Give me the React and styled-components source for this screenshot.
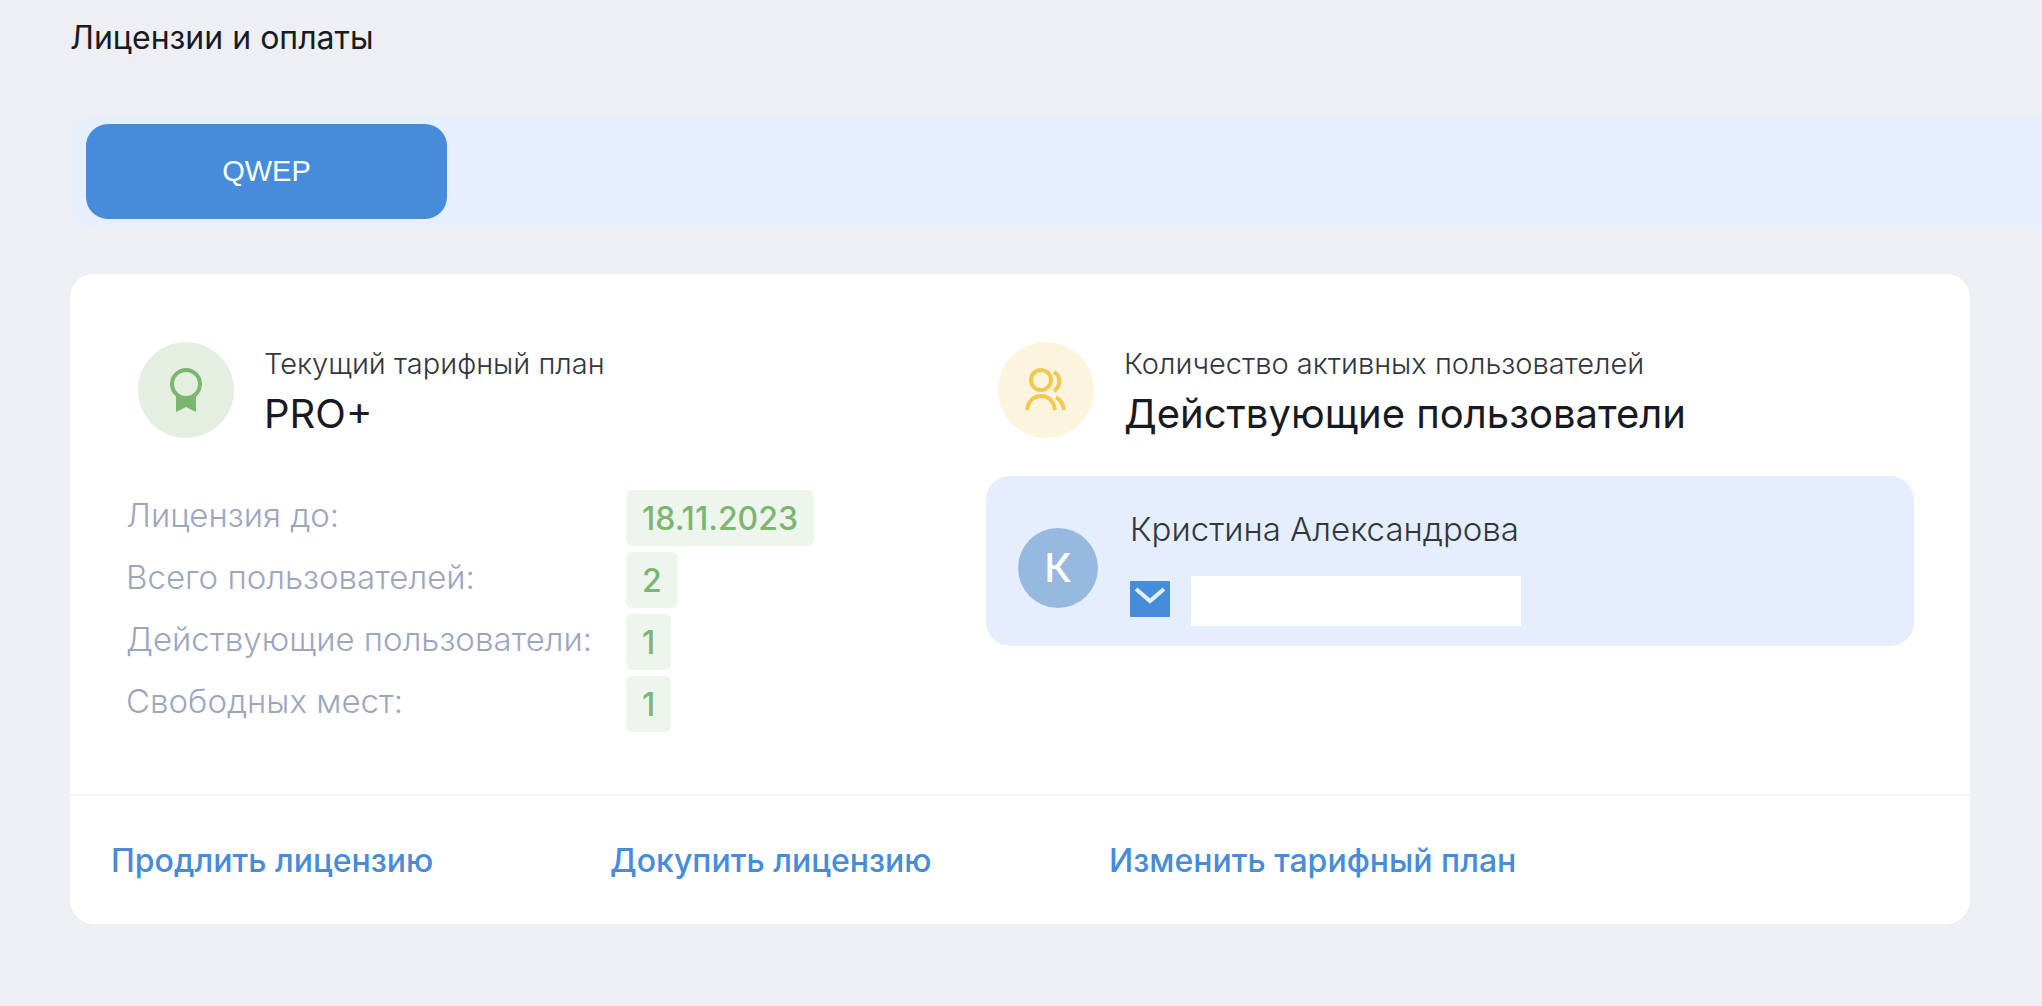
import React from 'react'
import styled, { createGlobalStyle } from 'styled-components';

const stats = [
  { label: 'Лицензия до:', value: '18.11.2023' },
  { label: 'Всего пользователей:', value: '2' },
  { label: 'Действующие пользователи:', value: '1' },
  { label: 'Свободных мест:', value: '1' },
];

const links = ['Продлить лицензию', 'Докупить лицензию', 'Изменить тарифный план'];

const AwardIcon = () => (
  <svg width="48" height="48" viewBox="0 0 48 48" fill="none" aria-hidden="true">
    <circle cx="24" cy="18" r="14" stroke="#7bb671" strokeWidth="4" />
    <path d="M14 29q10 5 20 0v17l-10-5-10 5z" fill="#7bb671" />
  </svg>
);

const UsersIcon = () => (
  <svg width="48" height="48" viewBox="0 0 48 48" fill="none" stroke="#f4c850" strokeWidth="4" aria-hidden="true">
    <circle cx="19" cy="14" r="10" />
    <path d="M5 44c1-9 7-14 14-14s13 5 14 14" />
    <path d="M32 6c7 4 7 14 0 19M34 31c5 3 7 7 8 13" />
  </svg>
);

const MailIcon = () => (
  <svg width="40" height="40" viewBox="0 0 40 40" fill="none" aria-hidden="true">
    <rect width="40" height="36" rx="1" fill="#478bdb" />
    <path d="M6 8l14 12L34 8" stroke="#e4eefd" strokeWidth="4" />
  </svg>
);

const App = () => {
  return (
    <>
      <GlobalStyle />
      <Page>
        <Title>Лицензии и оплаты</Title>
        <Tabs>
          <Tab type="button">QWEP</Tab>
        </Tabs>
        <Card>
          <CardBody>
            <Plan>
              <Header>
                <IconCircle $color="#e4efe2"><AwardIcon /></IconCircle>
                <div>
                  <Caption>Текущий тарифный план</Caption>
                  <Heading>PRO+</Heading>
                </div>
              </Header>
              <Stats>
                {stats.map(({ label, value }) => (
                  <React.Fragment key={label}>
                    <StatLabel>{label}</StatLabel>
                    <StatValue><Badge>{value}</Badge></StatValue>
                  </React.Fragment>
                ))}
              </Stats>
            </Plan>
            <Users>
              <Header>
                <IconCircle $color="#fcf4dd"><UsersIcon /></IconCircle>
                <div>
                  <Caption>Количество активных пользователей</Caption>
                  <Heading>Действующие пользователи</Heading>
                </div>
              </Header>
              <UserCard>
                <Avatar>К</Avatar>
                <div>
                  <UserName>Кристина Александрова</UserName>
                  <Contact>
                    <MailIcon />
                    <Email type="email" aria-label="Email" readOnly />
                  </Contact>
                </div>
              </UserCard>
            </Users>
          </CardBody>
          <CardFooter>
            {links.map((text) => (
              <FooterLink href="#" key={text}>{text}</FooterLink>
            ))}
          </CardFooter>
        </Card>
      </Page>
    </>
  )
}

export default App;

const GlobalStyle = createGlobalStyle`
  * {
    box-sizing: border-box;
  }

  body {
    margin: 0;
    background: #edeff4;
    color: #171a21;
    font-family: Inter, "Noto Sans", sans-serif;
    overflow-x: hidden;
  }
`;

const Page = styled.main`
  padding: 18px 0 48px 70px;
`;

const Title = styled.h1`
  margin: 0 0 58px;
  font-size: 32px;
  font-weight: 400;
  line-height: 40px;
`;

const Tabs = styled.nav`
  display: flex;
  padding: 8px 16px;
  border-radius: 24px 0 0 24px;
  background: #e5effe;
`;

const Tab = styled.button`
  width: 361px;
  height: 95px;
  border: 0;
  border-radius: 22px;
  background: #478bdb;
  color: #fff;
  font-family: "Liberation Sans", Arial, sans-serif;
  font-size: 29px;
  cursor: pointer;
`;

const Card = styled.section`
  margin: 47px 72px 0 0;
  border-radius: 24px;
  background: #fff;
`;

const CardBody = styled.div`
  display: grid;
  grid-template-columns: 916px 1fr;
  padding: 68px 56px 62px 0;
`;

const Plan = styled.div`
  padding-left: 56px;
`;

const Users = styled.div``;

const Header = styled.div`
  display: flex;
  gap: 30px;
  padding-left: 12px;
`;

const IconCircle = styled.div`
  display: flex;
  align-items: center;
  justify-content: center;
  flex: none;
  width: 96px;
  height: 96px;
  border-radius: 50%;
  background: ${({ $color }) => $color};
`;

const Caption = styled.div`
  padding-top: 4px;
  color: #33363d;
  font-size: 29px;
  font-weight: 300;
  line-height: 36px;
`;

const Heading = styled.h2`
  margin: 8px 0 0;
  font-size: 40px;
  font-weight: 400;
  line-height: 48px;
`;

const Stats = styled.dl`
  display: grid;
  grid-template-columns: 500px 1fr;
  row-gap: 6px;
  margin: 52px 0 0;
`;

const StatLabel = styled.dt`
  color: #9da6be;
  font-size: 33px;
  font-weight: 300;
  line-height: 50px;
`;

const StatValue = styled.dd`
  display: flex;
  margin: 0;
`;

const Badge = styled.span`
  padding: 1px 16px 0;
  border-radius: 6px;
  background: #eef5ed;
  color: #7bb671;
  font-size: 32px;
  font-weight: 500;
  line-height: 55px;
`;

const UserCard = styled.div`
  display: flex;
  align-items: center;
  gap: 32px;
  margin-top: 38px;
  padding: 33px 32px 20px;
  border-radius: 24px;
  background: #e4eefd;
`;

const Avatar = styled.div`
  width: 80px;
  height: 80px;
  border-radius: 50%;
  background: #98b9df;
  color: #fff;
  font-size: 40px;
  font-weight: 500;
  line-height: 80px;
  text-align: center;
`;

const UserName = styled.div`
  color: #33363d;
  font-size: 33px;
  font-weight: 300;
  line-height: 40px;
`;

const Contact = styled.div`
  display: flex;
  align-items: center;
  gap: 21px;
  margin-top: 27px;
`;

const Email = styled.input`
  width: 330px;
  height: 50px;
  border: 0;
  background: #fff;
  font: inherit;
`;

const CardFooter = styled.footer`
  display: grid;
  grid-template-columns: repeat(3, 499px);
  padding: 45px 41px 43px;
  border-top: 2px solid #f3f6f9;
`;

const FooterLink = styled.a`
  color: #478bdb;
  font-size: 32px;
  font-weight: 500;
  line-height: 40px;
  text-decoration: none;
`;
